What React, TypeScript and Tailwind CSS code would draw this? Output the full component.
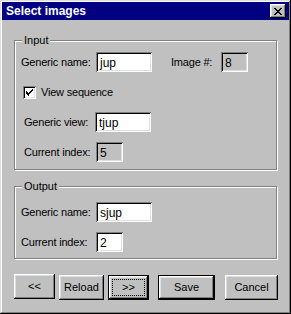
import React from "react";

const raised =
  "shadow-[inset_-1px_-1px_0_#000,inset_1px_1px_0_#fff,inset_-2px_-2px_0_#808080,inset_2px_2px_0_#dfdfdf]";
const sunken =
  "shadow-[inset_1px_1px_0_#808080,inset_-1px_-1px_0_#fff,inset_2px_2px_0_#000,inset_-2px_-2px_0_#dfdfdf]";

const TextBox: React.FC<{ value: string; width: string; disabled?: boolean }> = ({
  value,
  width,
  disabled,
}) => (
  <div
    className={`${width} h-[20px] shrink-0 ${sunken} ${
      disabled ? "bg-[#c0c0c0]" : "bg-white"
    } flex items-center pl-[4px] pt-[1px] text-[12px] leading-none`}
  >
    {value}
  </div>
);

const Label: React.FC<{ text: string; width: string; className?: string }> = ({
  text,
  width,
  className,
}) => (
  <span
    className={`${width} shrink-0 whitespace-nowrap text-[11px] leading-none tracking-[-0.2px] ${
      className ?? ""
    }`}
  >
    {text}
  </span>
);

const GroupBox: React.FC<{ label: string; className?: string; children: React.ReactNode }> = ({
  label,
  className,
  children,
}) => (
  <div
    className={`relative w-[263px] border border-[#808080] shadow-[inset_1px_1px_0_#fff,1px_1px_0_#fff] ${
      className ?? ""
    }`}
  >
    <span className="absolute left-[7px] -top-[7px] bg-[#c0c0c0] px-[2px] leading-[12px] text-[11px] whitespace-nowrap">
      {label}
    </span>
    {children}
  </div>
);

const Button: React.FC<{
  label: string;
  width: string;
  isDefault?: boolean;
  focused?: boolean;
}> = ({ label, width, isDefault, focused }) => (
  <button
    className={`relative ${width} h-[25px] bg-[#c0c0c0] text-[11px] leading-none whitespace-nowrap ${
      isDefault ? "border border-black" : ""
    }`}
  >
    <span className={`absolute inset-0 ${raised}`} />
    {focused && (
      <span className="absolute inset-[3px] border border-dotted border-black" />
    )}
    <span className="relative">{label}</span>
  </button>
);

export default function App() {
  return (
    <div
      className="w-[291px] h-[314px] bg-[#c0c0c0] p-[2px] text-black shadow-[inset_-1px_-1px_0_#000,inset_1px_1px_0_#dfdfdf,inset_-2px_-2px_0_#808080,inset_2px_2px_0_#fff]"
      style={{ fontFamily: '"Liberation Sans", Arial, sans-serif' }}
    >
      <div className="h-[18px] bg-[#000080] flex items-center justify-between pl-[4px] pr-[3px]">
        <span className="text-white font-bold text-[12px] leading-none">Select images</span>
        <button className={`w-[16px] h-[14px] bg-[#c0c0c0] ${raised} flex items-center justify-center`}>
          <svg width="8" height="7" viewBox="0 0 8 7">
            <path d="M0 0h2v1H0zM6 0h2v1H6zM1 1h2v1H1zM5 1h2v1H5zM2 2h4v1H2zM3 3h2v1H3zM2 4h4v1H2zM1 5h2v1H1zM5 5h2v1H5zM0 6h2v1H0zM6 6h2v1H6z" fill="#000" />
          </svg>
        </button>
      </div>

      <div className="pl-[12px] pt-[20px]">
        <GroupBox label="Input" className="h-[130px] pt-[11px]">
          <div className="flex items-center pl-[6px]">
            <Label text="Generic name:" width="w-[75px]" />
            <TextBox value="jup" width="w-[56px]" />
            <Label text="Image #:" width="w-[50px]" className="ml-[19px]" />
            <TextBox value="8" width="w-[27px]" disabled />
          </div>

          <div className="flex items-center pl-[8px] mt-[14px]">
            <div className={`w-[13px] h-[13px] shrink-0 bg-white ${sunken} flex items-center justify-center`}>
              <svg width="7" height="7" viewBox="0 0 7 7">
                <path d="M6 0h1v1H6zM5 1h2v1H5zM0 2h1v1H0zM4 2h2v1H4zM0 3h2v1H0zM3 3h2v1H3zM0 4h4v1H0zM1 5h2v1H1zM2 6h1v1H2z" fill="#000" />
              </svg>
            </div>
            <Label text="View sequence" width="w-auto" className="ml-[5px]" />
          </div>

          <div className="flex items-center pl-[9px] mt-[13px]">
            <Label text="Generic view:" width="w-[71px]" />
            <TextBox value="tjup" width="w-[56px]" />
          </div>

          <div className="flex items-center pl-[9px] mt-[10px]">
            <Label text="Current index:" width="w-[72px]" />
            <TextBox value="5" width="w-[27px]" disabled />
          </div>
        </GroupBox>

        <GroupBox label="Output" className="h-[73px] mt-[16px] pt-[15px]">
          <div className="flex items-center pl-[6px]">
            <Label text="Generic name:" width="w-[75px]" />
            <TextBox value="sjup" width="w-[56px]" />
          </div>
          <div className="flex items-center pl-[6px] mt-[10px]">
            <Label text="Current index:" width="w-[75px]" />
            <TextBox value="2" width="w-[27px]" />
          </div>
        </GroupBox>

        <div className="flex mt-[15px] w-[264px]">
          <Button label="<<" width="w-[41px]" />
          <div className="ml-[4px]">
            <Button label="Reload" width="w-[45px]" />
          </div>
          <div className="ml-[4px]">
            <Button label=">>" width="w-[41px]" isDefault focused />
          </div>
          <div className="ml-[9px]">
            <Button label="Save" width="w-[57px]" isDefault />
          </div>
          <div className="ml-auto">
            <Button label="Cancel" width="w-[53px]" />
          </div>
        </div>
      </div>
    </div>
  );
}
